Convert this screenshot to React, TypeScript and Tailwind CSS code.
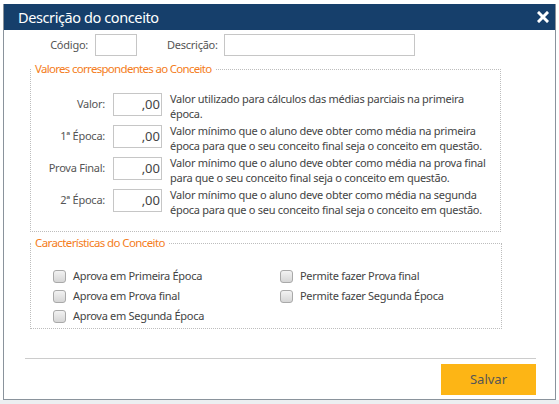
import React from 'react';

const font = { fontFamily: '"Noto Sans", "Open Sans", Arial, sans-serif' };

interface IValorRowProps {
    label: string;
    lines: string[];
}

function ValorRow({ label, lines }: IValorRowProps) {
    return (
        <div className="flex items-start">
            <div className="w-[74px] mt-[5px] text-right text-[11px] leading-[16px] tracking-[-0.25px] text-[#555]">{label}</div>
            <div className="ml-[8px] mt-[2px] w-[49px] h-[23px] border border-[#c6c6c6] bg-white text-right text-[13px] leading-[21px] pr-[1px] text-[#444]">
                ,00
            </div>
            <div className="ml-[8px] text-[11px] leading-[15px] tracking-[-0.27px] text-[#444] whitespace-nowrap">
                {lines.map((l) => (
                    <div key={l}>{l}</div>
                ))}
            </div>
        </div>
    );
}

function Check({ label }: { label: string }) {
    return (
        <label className="flex items-center h-[20px] text-[11px] tracking-[-0.3px] text-[#444] whitespace-nowrap">
            <span className="w-[13px] h-[13px] rounded-[3px] border border-[#a9a9a9] bg-gradient-to-b from-[#f2f2f2] to-[#d6d6d6]" />
            <span className="ml-[7px]">{label}</span>
        </label>
    );
}

export default function App() {
    return (
        <div className="w-[559px] h-[404px] bg-white flex flex-col overflow-hidden" style={font}>
            <div className="pl-[3px] pt-[4px]">
                <div className="w-[553px] h-[396px] border-x border-b border-[#8a939c] flex flex-col bg-white">
                    <div className="h-[26px] bg-[#163f6b] flex items-center justify-between pl-[14px] pr-[6px]">
                        <span className="text-white text-[14.5px] tracking-[-0.4px] leading-none">Descrição do conceito</span>
                        <svg width="12" height="12" viewBox="0 0 12 12">
                            <path d="M2 2 L10 10 M10 2 L2 10" stroke="#fff" strokeWidth="3" strokeLinecap="square" />
                        </svg>
                    </div>

                    <div className="flex items-center mt-[4px] text-[11px] tracking-[-0.25px] text-[#555]">
                        <span className="w-[84px] text-right">Código:</span>
                        <div className="ml-[7px] w-[42px] h-[22px] border border-[#c6c6c6]" />
                        <span className="ml-[30px]">Descrição:</span>
                        <div className="ml-[6px] w-[191px] h-[22px] border border-[#c6c6c6]" />
                    </div>

                    <fieldset className="mt-[5px] ml-[26px] w-[471px] border border-dotted border-[#bdbdbd]">
                        <legend className="px-[4px] text-[11.5px] leading-[16px] tracking-[-0.7px] text-[#f47c20]">
                            Valores correspondentes ao Conceito
                        </legend>
                        <div className="pt-[14px] pb-[14px] flex flex-col gap-[2px]">
                            <ValorRow label="Valor:" lines={['Valor utilizado para cálculos das médias parciais na primeira', 'época.']} />
                            <ValorRow
                                label="1ª Época:"
                                lines={['Valor mínimo que o aluno deve obter como média na primeira', 'época para que o seu conceito final seja o conceito em questão.']}
                            />
                            <ValorRow
                                label="Prova Final:"
                                lines={['Valor mínimo que o aluno deve obter como média na prova final', 'para que o seu conceito final seja o conceito em questão.']}
                            />
                            <ValorRow
                                label="2ª Época:"
                                lines={['Valor mínimo que o aluno deve obter como média na segunda', 'época para que o seu conceito final seja o conceito em questão.']}
                            />
                        </div>
                    </fieldset>

                    <fieldset className="mt-[3px] ml-[26px] w-[472px] border border-dotted border-[#bdbdbd]">
                        <legend className="px-[4px] text-[11.5px] leading-[16px] tracking-[-0.6px] text-[#f47c20]">
                            Características do Conceito
                        </legend>
                        <div className="pt-[15px] pb-[2px] pl-[22px] flex">
                            <div className="w-[227px] flex flex-col">
                                <Check label="Aprova em Primeira Época" />
                                <Check label="Aprova em Prova final" />
                                <Check label="Aprova em Segunda Época" />
                            </div>
                            <div className="flex flex-col">
                                <Check label="Permite fazer Prova final" />
                                <Check label="Permite fazer Segunda Época" />
                            </div>
                        </div>
                    </fieldset>

                    <div className="mt-[29px] ml-[21px] w-[511px] h-px bg-[#cccccc]" />
                    <div className="flex justify-end pr-[19px] mt-[5px]">
                        <button className="w-[95px] h-[31px] bg-[#fdb515] text-[13px] text-[#555]">Salvar</button>
                    </div>
                </div>
            </div>
            <div className="flex-1 bg-[#eceff1]" />
        </div>
    );
}
